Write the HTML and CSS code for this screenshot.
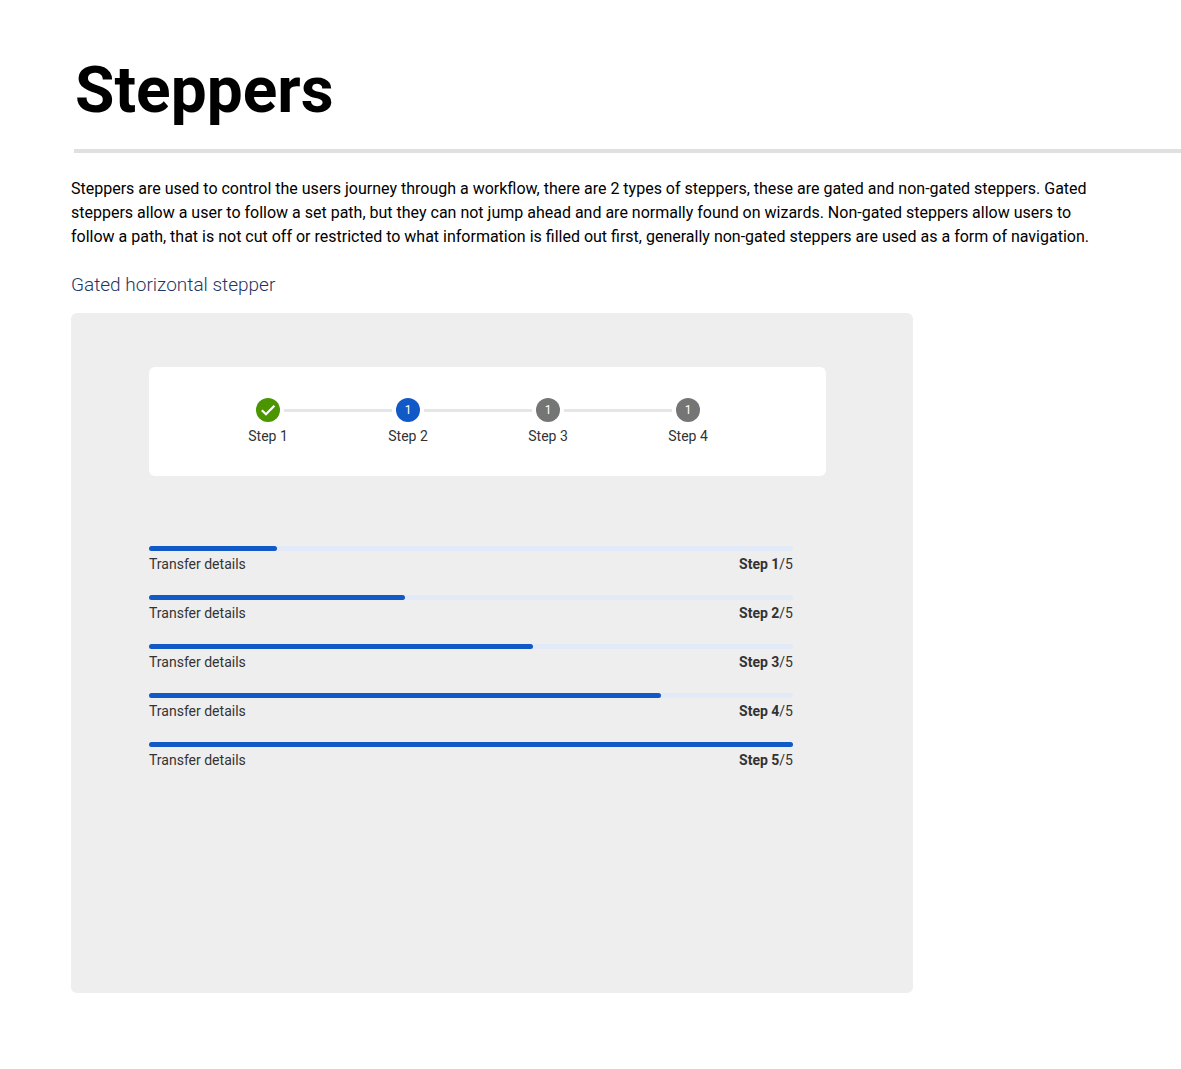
FILE: index.html
```html
<!DOCTYPE html>
<html lang="en">
<head>
  <meta charset="utf-8">
  <meta name="viewport" content="width=device-width, initial-scale=1">
  <title>Steppers</title>
  <link rel="stylesheet" href="styles.css">
</head>
<body>
  <header class="page-header">
    <h1 class="page-title">Steppers</h1>
  </header>
  <main class="content">
    <p class="intro">Steppers are used to control the users journey through a workflow, there are 2 types of steppers, these are gated and non-gated steppers. Gated steppers allow a user to follow a set path, but they can not jump ahead and are normally found on wizards. Non-gated steppers allow users to follow a path, that is not cut off or restricted to what information is filled out first, generally non-gated steppers are used as a form of navigation.</p>
    <h2 class="section-title">Gated horizontal stepper</h2>
    <section class="panel">
      <div class="card">
        <ol class="stepper">
          <li class="step step-done">
            <span class="marker">
              <svg class="check" viewBox="0 0 24 24" aria-hidden="true"><path d="M5.8 12.2L10 16.2L18.4 7.8" fill="none" stroke="currentColor" stroke-width="2.2"/></svg>
            </span>
            <span class="step-label">Step 1</span>
          </li>
          <li class="step step-current" aria-current="step">
            <span class="marker">1</span>
            <span class="step-label">Step 2</span>
          </li>
          <li class="step">
            <span class="marker">1</span>
            <span class="step-label">Step 3</span>
          </li>
          <li class="step">
            <span class="marker">1</span>
            <span class="step-label">Step 4</span>
          </li>
        </ol>
      </div>
      <div class="progress-list">
        <div class="progress-item">
          <progress class="bar" id="p1" value="32" max="161"></progress>
          <label for="p1">Transfer details</label>
          <span class="count"><b>Step 1</b>/5</span>
        </div>
        <div class="progress-item">
          <progress class="bar" id="p2" value="64" max="161"></progress>
          <label for="p2">Transfer details</label>
          <span class="count"><b>Step 2</b>/5</span>
        </div>
        <div class="progress-item">
          <progress class="bar" id="p3" value="96" max="161"></progress>
          <label for="p3">Transfer details</label>
          <span class="count"><b>Step 3</b>/5</span>
        </div>
        <div class="progress-item">
          <progress class="bar" id="p4" value="128" max="161"></progress>
          <label for="p4">Transfer details</label>
          <span class="count"><b>Step 4</b>/5</span>
        </div>
        <div class="progress-item">
          <progress class="bar" id="p5" value="161" max="161"></progress>
          <label for="p5">Transfer details</label>
          <span class="count"><b>Step 5</b>/5</span>
        </div>
      </div>
    </section>
  </main>
</body>
</html>
```
FILE: styles.css
```css
* {
  box-sizing: border-box;
}

body {
  margin: 0;
  background: #fff;
  color: #000;
  font-family: Roboto, "Liberation Sans", sans-serif;
  font-size: 16px;
  line-height: 24px;
}

.page-header {
  margin-left: 74px;
  padding-top: 51px;
  border-bottom: 4px solid #e0e0e0;
}

.page-title {
  margin: 0;
  padding: 0 0 18px 1px;
  font-size: 64px;
  font-weight: 700;
  line-height: 80px;
}

.content {
  padding: 24px 71px 76px;
}

.intro {
  max-width: 1032px;
  margin: 0;
}

.section-title {
  margin: 24px 0 16px;
  color: #1f3663;
  font-size: 19px;
  font-weight: 300;
  line-height: 24px;
}

.panel {
  max-width: 842px;
  min-height: 680px;
  padding: 54px 87px 54px 78px;
  border-radius: 6px;
  background: #eee;
}

.card {
  padding: 31px 68px 30px 49px;
  border-radius: 6px;
  background: #fff;
}

.stepper {
  display: flex;
  margin: 0;
  padding: 0;
  list-style: none;
}

.step {
  display: grid;
  flex: 1;
  grid-template-columns: 1fr 24px 1fr;
  column-gap: 4px;
  row-gap: 4px;
  align-items: center;
}

.step::before,
.step::after {
  height: 3px;
  background: #e6e6e6;
  content: "";
}

.step::after {
  grid-row: 1;
  grid-column: 3;
}

.step:first-child::before,
.step:last-child::after {
  visibility: hidden;
}

.marker {
  display: flex;
  align-items: center;
  justify-content: center;
  height: 24px;
  border-radius: 50%;
  background: #757575;
  color: #fff;
  font-size: 12px;
}

.step-done .marker {
  background: #4b9600;
}

.step-current .marker {
  background: #1259c8;
}

.check {
  width: 24px;
  height: 24px;
}

.step-label {
  grid-column: 1 / -1;
  color: #333;
  font-size: 14px;
  line-height: 20px;
  text-align: center;
}

.progress-list {
  display: grid;
  gap: 21px;
  margin: 70px 33px 0 0;
}

.progress-item {
  display: grid;
  grid-template-columns: 1fr auto;
  row-gap: 3px;
  color: #333;
  font-size: 14px;
  line-height: 20px;
}

.bar {
  display: block;
  grid-column: 1 / -1;
  width: 100%;
  height: 5px;
  border: 0;
  appearance: none;
}

.bar::-webkit-progress-bar {
  border-radius: 3px;
  background: #e2eaf8;
}

.bar::-webkit-progress-value {
  border-radius: 3px;
  background: #1259c8;
}
```
